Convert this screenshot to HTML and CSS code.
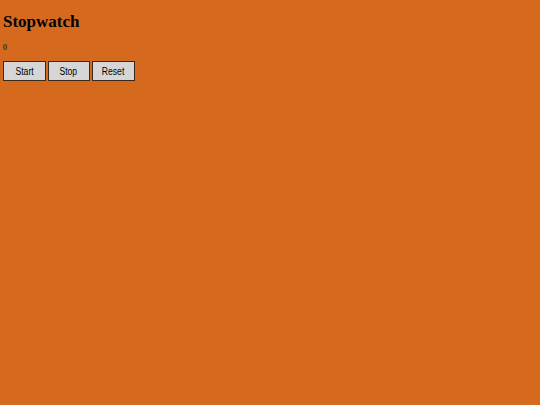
FILE: index.html
```html
<!DOCTYPE html>
<html>
<head>
<meta charset="utf-8">
<link rel="stylesheet" href="styles.css">
</head>
<body>
<h1 class="title">Stopwatch</h1>
<p class="time">0</p>
<div class="controls">
  <button class="btn"><span class="btn-label">Start</span></button>
  <button class="btn"><span class="btn-label">Stop</span></button>
  <button class="btn"><span class="btn-label">Reset</span></button>
</div>
</body>
</html>
```
FILE: styles.css
```css
html, body {
  margin: 0;
  background: #d56a1f;
}
body {
  padding: 0 3px;
  font-family: "Liberation Serif", serif;
  color: #000;
}
.title {
  font-size: 17px;
  font-weight: bold;
  line-height: 20px;
  margin: 12px 0 0 0;
}
.time {
  font-size: 8px;
  line-height: 10px;
  margin: 11px 0 0 0;
}
.controls {
  display: flex;
  gap: 2px;
  margin-top: 8px;
}
.btn {
  width: 42.5px;
  height: 20px;
  padding: 0;
  margin: 0;
  background: #d6d6d6;
  border: 1px solid #3a2a1a;
  font-family: "Liberation Sans", sans-serif;
  font-size: 10px;
  color: #000;
}
.btn-label {
  display: inline-block;
  transform: scaleX(0.86);
}
```
